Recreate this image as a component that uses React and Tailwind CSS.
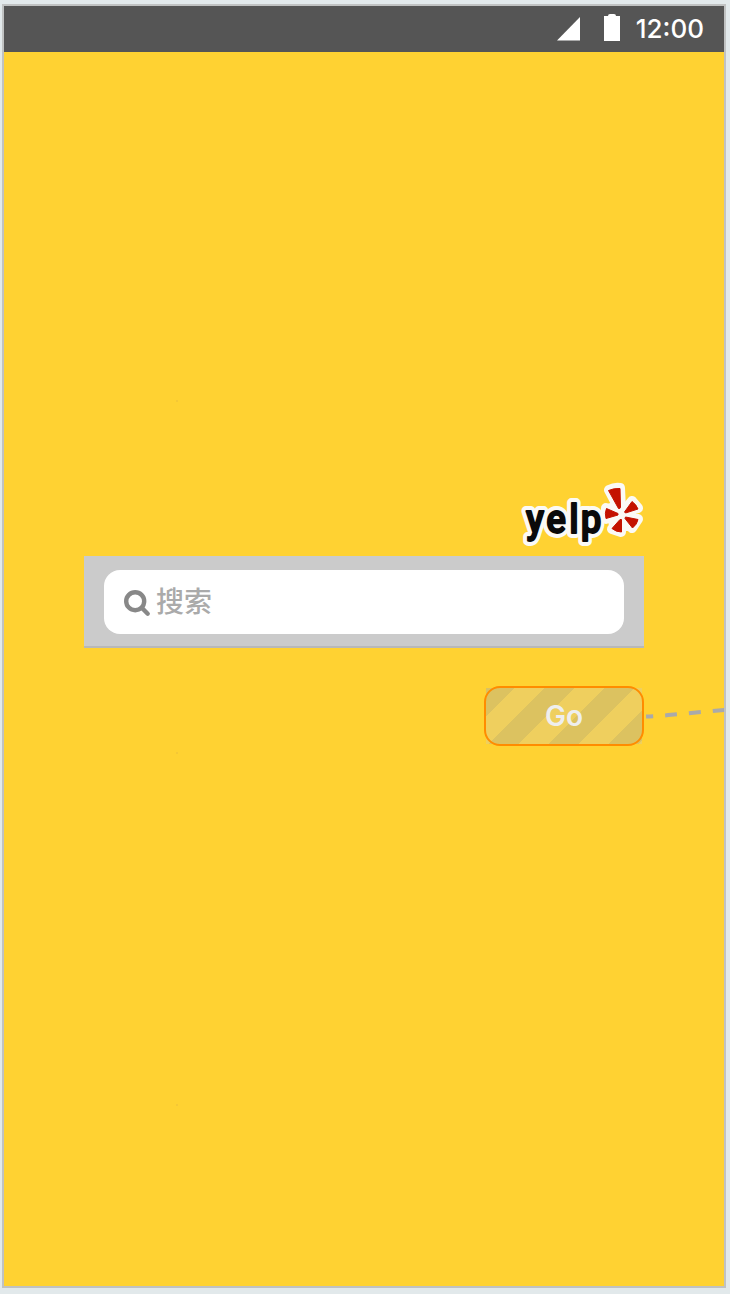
const marks = [{ y: 394 }, { y: 746 }, { y: 1098 }];

function StatusBar() {
  return (
    <header className="flex h-[46px] shrink-0 items-center justify-end bg-[#555555] pr-[20px] text-white">
      <svg className="mr-[23px] h-[24px] w-[23px]" viewBox="0 0 23 24" fill="currentColor">
        <path d="M23 0V23.500H0Z" />
      </svg>
      <svg className="mr-[16px] h-[27px] w-[17px] -translate-y-[2px]" viewBox="0 0 17 27" fill="currentColor">
        <path d="M1 2H5Q5 0 7 0H11Q13 0 13 2H17V27H1Z" />
      </svg>
      <span className="whitespace-nowrap font-['Inter',sans-serif] text-[26px] font-medium leading-[46px]">12:00</span>
    </header>
  );
}

function YelpLogo() {
  return (
    <svg className="h-[68px] w-[128px]" viewBox="518 481 128 68" aria-label="yelp">
      <g stroke="#fbfaf6" strokeWidth="10" strokeLinejoin="round">
        <text transform="translate(525 532.5) scale(0.92 1)" x="1 23.2 48 60.5" y="0" fontSize="40" fontWeight="500" fill="#fbfaf6" fontFamily="Roboto, sans-serif" aria-hidden="true">yelp</text>
        <g fill="#fbfaf6">
          <path d="M609 490Q615 487 620 488L621 509H619Z" />
          <path d="M606 508L618 514L606 519Z" />
          <path d="M624 511L632 501L638 508Z" />
          <path d="M625 517L638 519L632 528Z" />
          <path d="M621 519V532L612 529Z" />
        </g>
        <path d="M611 508H631V526H614Z" fill="#fbfaf6" />
      </g>
      <text transform="translate(525 532.5) scale(0.92 1)" x="1 23.2 48 60.5" y="0" fontSize="40" fontWeight="500" fill="#0a0a0a" stroke="#0a0a0a" strokeWidth="1.800" strokeLinejoin="round" fontFamily="Roboto, sans-serif">yelp</text>
      <g fill="#c41200" stroke="#c41200" strokeWidth="1" strokeLinejoin="round">
        <path d="M608.500 490.500Q614 488 620 488.500L620.500 507.500Q620 509 618.500 508.500Z" />
        <path d="M606.500 508.500L618 513.500V515L606 518.500Q604.500 513 606.500 508.500Z" />
        <path d="M624.500 512L632 501.500Q636 504 638 509L625.500 513Z" />
        <path d="M625.500 517L638 519.500Q637 524.500 632.500 528L625 518.500Z" />
        <path d="M620 519.500H621.500V532Q616 532 612 528.500Z" />
      </g>
    </svg>
  );
}

export default function App() {
  return (
    <div className="h-[1294px] w-[730px] overflow-hidden bg-[#e2e9eb] pl-[2px] pt-[4px]">
      <main className="relative flex h-[1284px] w-[724px] flex-col border-2 border-[#c0c2c2] bg-[#ffd232]">
        <StatusBar />
        <section className="flex flex-col items-end pl-[80px] pr-[78px] pt-[429px]">
          <YelpLogo />
          <div className="mr-[2px] mt-[7px] h-[92px] w-[560px] border-b-2 border-[#b8b8b8] bg-[#cbcbcb] px-[20px] pt-[14px]">
            <div className="flex h-[64px] items-center rounded-[16px] bg-white pl-[20px]">
              <svg className="h-[27px] w-[27px] translate-y-[1px]" viewBox="0 0 27 27" fill="none" stroke="#888" strokeWidth="4.400" strokeLinecap="round">
                <circle cx="11.200" cy="11.200" r="9" />
                <path d="M18 18L23.700 23.700" />
              </svg>
              <span className="ml-[5px] -translate-y-[2px] font-['Noto_Sans_CJK_SC',sans-serif] text-[28px] font-medium leading-[40px] text-[#aaaaaa]">搜索</span>
            </div>
          </div>
          <div className="relative mr-[2px] mt-[38px] h-[60px] w-[160px] p-[2px]">
            <button className="block h-[56px] w-[156px] bg-[repeating-linear-gradient(135deg,#dcc260_-0.9px,#dcc260_20.31px,#efcf5e_20.31px,#efcf5e_41.53px)] font-['Inter',sans-serif] text-[28px] font-semibold leading-[57px] text-[#eeeeee]">Go</button>
            <span className="pointer-events-none absolute inset-0 rounded-[16px] border-2 border-[#ff8c00]" />
          </div>
        </section>
        <svg className="pointer-events-none absolute left-[642px] top-[700px] h-[16px] w-[78px]" viewBox="646 706 78 16" fill="none">
          <path d="M646 716.500Q659 716.300 671 714.800L726 709.800" stroke="#aaaaaa" strokeWidth="4" strokeDasharray="7 12 12 12 12 12 14 20" />
        </svg>
        {marks.map((m) => (
          <span key={m.y} className="absolute left-[172px] size-[2px] bg-[#f5c836]" style={{ top: m.y }} />
        ))}
      </main>
    </div>
  );
}
